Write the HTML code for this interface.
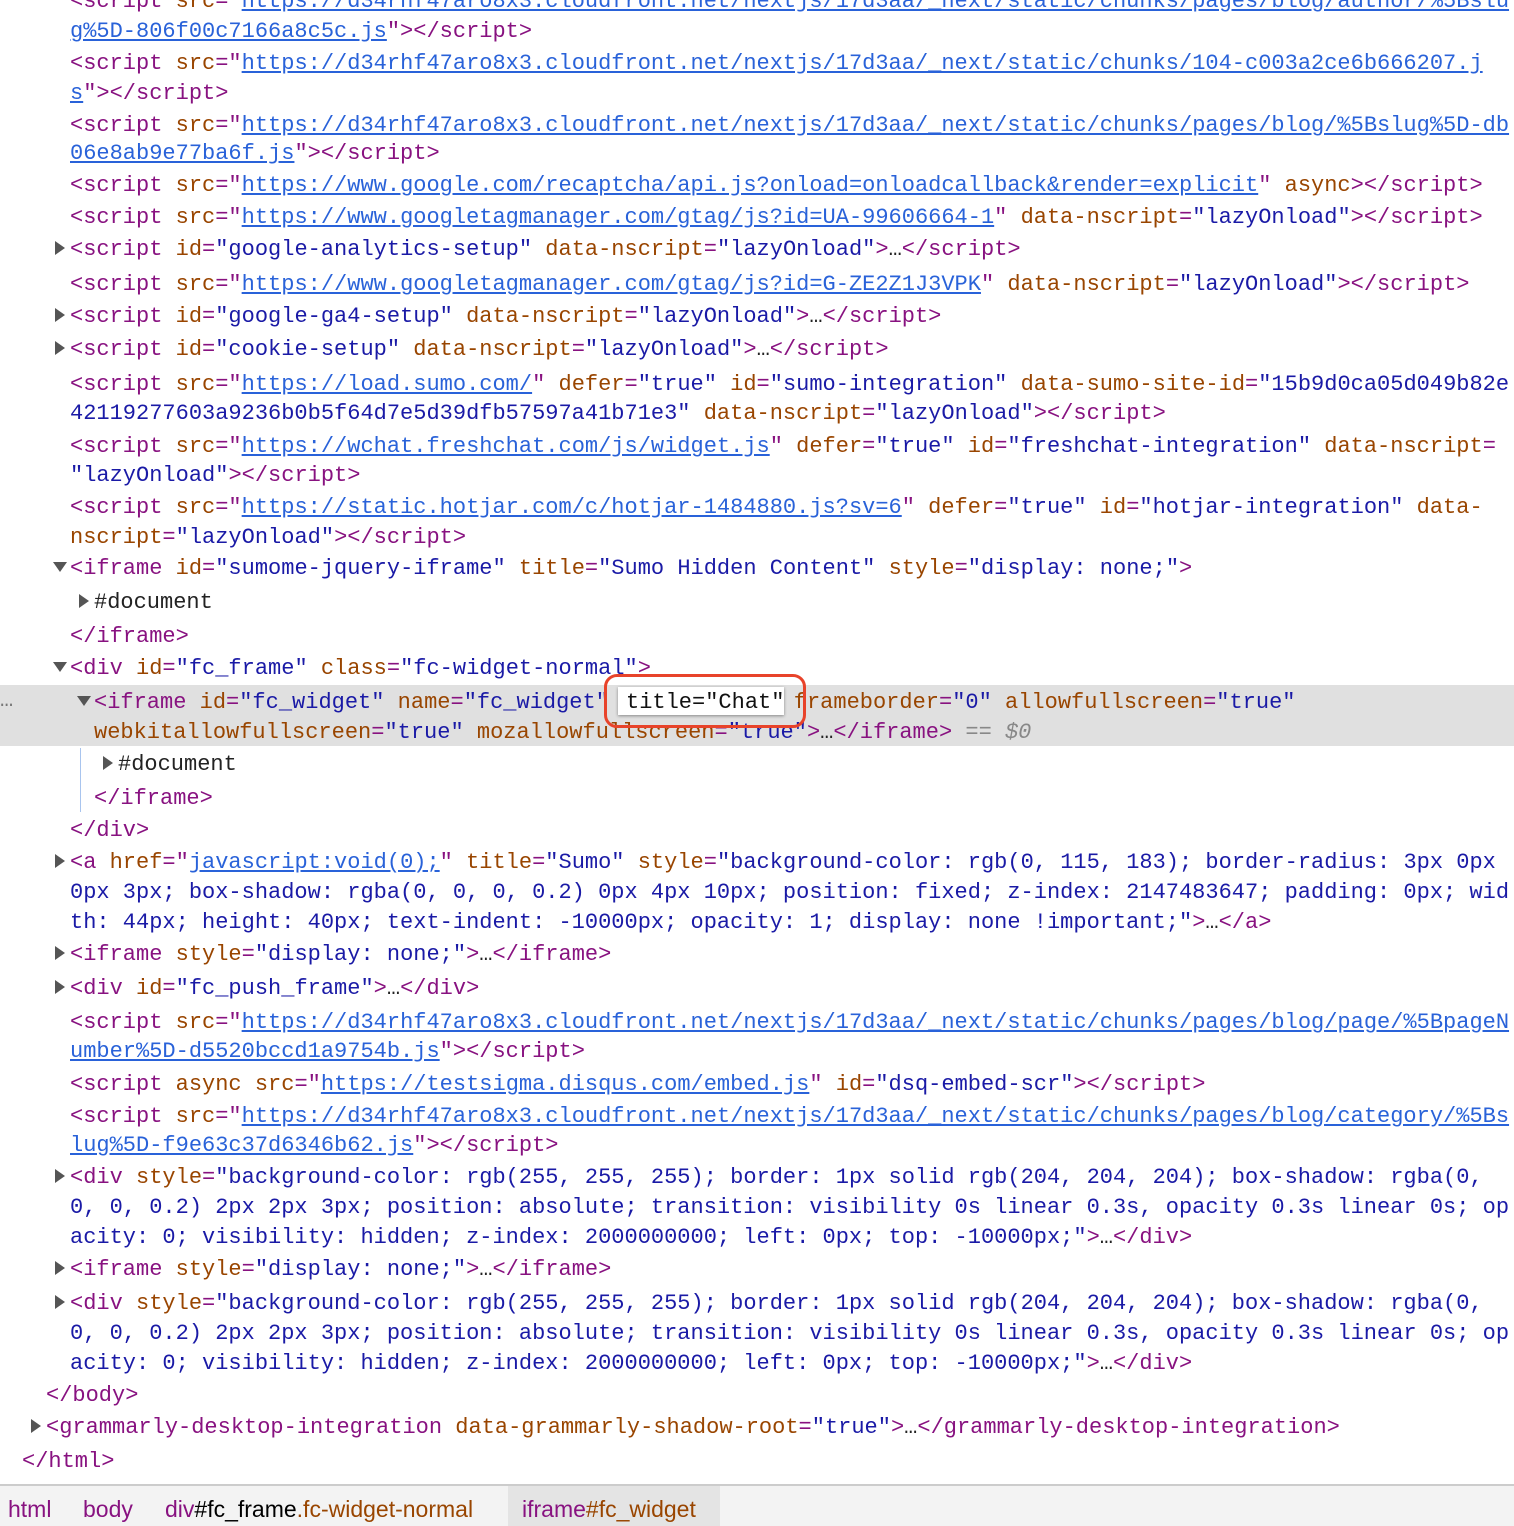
<!DOCTYPE html>
<html><head><meta charset="utf-8"><style>
html,body{margin:0;padding:0;background:#fff;width:1514px;height:1526px;overflow:hidden;position:relative}
.r{position:absolute;white-space:pre;font-family:"Liberation Mono",monospace;font-size:22px;line-height:26px;color:#222;margin-top:2px}
.t{color:#881280}.a{color:#994500}.v{color:#1a1aa6}.l{color:#2962d9;text-decoration:underline}
.tri{position:absolute;width:0;height:0;border-style:solid}
.tr{border-width:7px 0 7px 10px;border-color:transparent transparent transparent #555}
.td{border-width:10px 7px 0 7px;border-color:#555 transparent transparent transparent}
#hl{position:absolute;left:0;top:685px;width:1514px;height:61px;background:#e0e0e0}
#bar{position:absolute;left:0;top:1484px;width:1514px;height:42px;background:#f3f3f3;border-top:2px solid #ccc;font-family:"Liberation Sans",sans-serif;font-size:23px}
#bar > span{position:absolute;top:10px;white-space:nowrap}
</style></head><body>
<div id="hl"></div>
<div style="position:absolute;left:80px;top:748px;width:1px;height:64px;background:#a8c4ee"></div>
<div class="r" style="left:70px;top:-13px"><span class="t">&lt;script </span><span class="a">src</span><span class="t">="</span><span class="l">https://d34rhf47aro8x3.cloudfront.net/nextjs/17d3aa/_next/static/chunks/pages/blog/author/%5Bslu</span></div>
<div class="r" style="left:70px;top:17px"><span class="l">g%5D-806f00c7166a8c5c.js</span><span class="t">"&gt;&lt;/script&gt;</span></div>
<div class="r" style="left:70px;top:49px"><span class="t">&lt;script </span><span class="a">src</span><span class="t">="</span><span class="l">https://d34rhf47aro8x3.cloudfront.net/nextjs/17d3aa/_next/static/chunks/104-c003a2ce6b666207.j</span></div>
<div class="r" style="left:70px;top:79px"><span class="l">s</span><span class="t">"&gt;&lt;/script&gt;</span></div>
<div class="r" style="left:70px;top:111px"><span class="t">&lt;script </span><span class="a">src</span><span class="t">="</span><span class="l">https://d34rhf47aro8x3.cloudfront.net/nextjs/17d3aa/_next/static/chunks/pages/blog/%5Bslug%5D-db</span></div>
<div class="r" style="left:70px;top:139px"><span class="l">06e8ab9e77ba6f.js</span><span class="t">"&gt;&lt;/script&gt;</span></div>
<div class="r" style="left:70px;top:171px"><span class="t">&lt;script </span><span class="a">src</span><span class="t">="</span><span class="l">https://www.google.com/recaptcha/api.js?onload=onloadcallback&amp;render=explicit</span><span class="t">" </span><span class="a">async</span><span class="t">&gt;&lt;/script&gt;</span></div>
<div class="r" style="left:70px;top:203px"><span class="t">&lt;script </span><span class="a">src</span><span class="t">="</span><span class="l">https://www.googletagmanager.com/gtag/js?id=UA-99606664-1</span><span class="t">" </span><span class="a">data-nscript</span><span class="t">=</span><span class="v">"lazyOnload"</span><span class="t">&gt;&lt;/script&gt;</span></div>
<div class="tri tr" style="left:55px;top:241px"></div>
<div class="r" style="left:70px;top:235px"><span class="t">&lt;script </span><span class="a">id</span><span class="t">=</span><span class="v">"google-analytics-setup"</span> <span class="a">data-nscript</span><span class="t">=</span><span class="v">"lazyOnload"</span><span class="t">&gt;</span>…<span class="t">&lt;/script&gt;</span></div>
<div class="r" style="left:70px;top:270px"><span class="t">&lt;script </span><span class="a">src</span><span class="t">="</span><span class="l">https://www.googletagmanager.com/gtag/js?id=G-ZE2Z1J3VPK</span><span class="t">" </span><span class="a">data-nscript</span><span class="t">=</span><span class="v">"lazyOnload"</span><span class="t">&gt;&lt;/script&gt;</span></div>
<div class="tri tr" style="left:55px;top:308px"></div>
<div class="r" style="left:70px;top:302px"><span class="t">&lt;script </span><span class="a">id</span><span class="t">=</span><span class="v">"google-ga4-setup"</span> <span class="a">data-nscript</span><span class="t">=</span><span class="v">"lazyOnload"</span><span class="t">&gt;</span>…<span class="t">&lt;/script&gt;</span></div>
<div class="tri tr" style="left:55px;top:341px"></div>
<div class="r" style="left:70px;top:335px"><span class="t">&lt;script </span><span class="a">id</span><span class="t">=</span><span class="v">"cookie-setup"</span> <span class="a">data-nscript</span><span class="t">=</span><span class="v">"lazyOnload"</span><span class="t">&gt;</span>…<span class="t">&lt;/script&gt;</span></div>
<div class="r" style="left:70px;top:370px"><span class="t">&lt;script </span><span class="a">src</span><span class="t">="</span><span class="l">https://load.sumo.com/</span><span class="t">" </span><span class="a">defer</span><span class="t">=</span><span class="v">"true"</span> <span class="a">id</span><span class="t">=</span><span class="v">"sumo-integration"</span> <span class="a">data-sumo-site-id</span><span class="t">=</span><span class="v">"15b9d0ca05d049b82e</span></div>
<div class="r" style="left:70px;top:399px"><span class="v">42119277603a9236b0b5f64d7e5d39dfb57597a41b71e3"</span> <span class="a">data-nscript</span><span class="t">=</span><span class="v">"lazyOnload"</span><span class="t">&gt;&lt;/script&gt;</span></div>
<div class="r" style="left:70px;top:432px"><span class="t">&lt;script </span><span class="a">src</span><span class="t">="</span><span class="l">https://wchat.freshchat.com/js/widget.js</span><span class="t">" </span><span class="a">defer</span><span class="t">=</span><span class="v">"true"</span> <span class="a">id</span><span class="t">=</span><span class="v">"freshchat-integration"</span> <span class="a">data-nscript</span><span class="t">=</span></div>
<div class="r" style="left:70px;top:461px"><span class="v">"lazyOnload"</span><span class="t">&gt;&lt;/script&gt;</span></div>
<div class="r" style="left:70px;top:493px"><span class="t">&lt;script </span><span class="a">src</span><span class="t">="</span><span class="l">https://static.hotjar.com/c/hotjar-1484880.js?sv=6</span><span class="t">" </span><span class="a">defer</span><span class="t">=</span><span class="v">"true"</span> <span class="a">id</span><span class="t">=</span><span class="v">"hotjar-integration"</span> <span class="a">data-</span></div>
<div class="r" style="left:70px;top:523px"><span class="a">nscript</span><span class="t">=</span><span class="v">"lazyOnload"</span><span class="t">&gt;&lt;/script&gt;</span></div>
<div class="tri td" style="left:53px;top:562px"></div>
<div class="r" style="left:70px;top:554px"><span class="t">&lt;iframe </span><span class="a">id</span><span class="t">=</span><span class="v">"sumome-jquery-iframe"</span> <span class="a">title</span><span class="t">=</span><span class="v">"Sumo Hidden Content"</span> <span class="a">style</span><span class="t">=</span><span class="v">"display: none;"</span><span class="t">&gt;</span></div>
<div class="tri tr" style="left:79px;top:594px"></div>
<div class="r" style="left:94px;top:588px">#document</div>
<div class="r" style="left:70px;top:622px"><span class="t">&lt;/iframe&gt;</span></div>
<div class="tri td" style="left:53px;top:662px"></div>
<div class="r" style="left:70px;top:654px"><span class="t">&lt;div </span><span class="a">id</span><span class="t">=</span><span class="v">"fc_frame"</span> <span class="a">class</span><span class="t">=</span><span class="v">"fc-widget-normal"</span><span class="t">&gt;</span></div>
<div class="r" style="left:0px;top:686px;color:#777">…</div>
<div class="tri td" style="left:77px;top:696px"></div>
<div class="r" style="left:94px;top:688px"><span class="t">&lt;iframe </span><span class="a">id</span><span class="t">=</span><span class="v">"fc_widget"</span> <span class="a">name</span><span class="t">=</span><span class="v">"fc_widget"</span> <span class="a">title</span><span class="t">=</span><span class="v">"Chat"</span> <span class="a">frameborder</span><span class="t">=</span><span class="v">"0"</span> <span class="a">allowfullscreen</span><span class="t">=</span><span class="v">"true"</span></div>
<div class="r" style="left:94px;top:718px"><span class="a">webkitallowfullscreen</span><span class="t">=</span><span class="v">"true"</span> <span class="a">mozallowfullscreen</span><span class="t">=</span><span class="v">"true"</span><span class="t">&gt;</span>…<span class="t">&lt;/iframe&gt;</span><span style="color:#888"> == <i>$0</i></span></div>
<div style="position:absolute;left:618px;top:687px;width:166px;height:28px;background:#fff;box-shadow:0 1px 3px rgba(0,0,0,.4)"></div>
<div class="r" style="left:626px;top:688px;color:#111">title="Chat"</div>
<div style="position:absolute;left:604px;top:674px;width:196px;height:48px;border:3px solid #e8432a;border-radius:13px"></div>
<div class="tri tr" style="left:103px;top:756px"></div>
<div class="r" style="left:118px;top:750px">#document</div>
<div class="r" style="left:94px;top:784px"><span class="t">&lt;/iframe&gt;</span></div>
<div class="r" style="left:70px;top:816px"><span class="t">&lt;/div&gt;</span></div>
<div class="tri tr" style="left:55px;top:854px"></div>
<div class="r" style="left:70px;top:848px"><span class="t">&lt;a </span><span class="a">href</span><span class="t">="</span><span class="l">javascript:void(0);</span><span class="t">" </span><span class="a">title</span><span class="t">=</span><span class="v">"Sumo"</span> <span class="a">style</span><span class="t">=</span><span class="v">"background-color: rgb(0, 115, 183); border-radius: 3px 0px</span></div>
<div class="r" style="left:70px;top:878px"><span class="v">0px 3px; box-shadow: rgba(0, 0, 0, 0.2) 0px 4px 10px; position: fixed; z-index: 2147483647; padding: 0px; wid</span></div>
<div class="r" style="left:70px;top:908px"><span class="v">th: 44px; height: 40px; text-indent: -10000px; opacity: 1; display: none !important;"</span><span class="t">&gt;</span>…<span class="t">&lt;/a&gt;</span></div>
<div class="tri tr" style="left:55px;top:946px"></div>
<div class="r" style="left:70px;top:940px"><span class="t">&lt;iframe </span><span class="a">style</span><span class="t">=</span><span class="v">"display: none;"</span><span class="t">&gt;</span>…<span class="t">&lt;/iframe&gt;</span></div>
<div class="tri tr" style="left:55px;top:980px"></div>
<div class="r" style="left:70px;top:974px"><span class="t">&lt;div </span><span class="a">id</span><span class="t">=</span><span class="v">"fc_push_frame"</span><span class="t">&gt;</span>…<span class="t">&lt;/div&gt;</span></div>
<div class="r" style="left:70px;top:1008px"><span class="t">&lt;script </span><span class="a">src</span><span class="t">="</span><span class="l">https://d34rhf47aro8x3.cloudfront.net/nextjs/17d3aa/_next/static/chunks/pages/blog/page/%5BpageN</span></div>
<div class="r" style="left:70px;top:1037px"><span class="l">umber%5D-d5520bccd1a9754b.js</span><span class="t">"&gt;&lt;/script&gt;</span></div>
<div class="r" style="left:70px;top:1070px"><span class="t">&lt;script </span><span class="a">async src</span><span class="t">="</span><span class="l">https://testsigma.disqus.com/embed.js</span><span class="t">" </span><span class="a">id</span><span class="t">=</span><span class="v">"dsq-embed-scr"</span><span class="t">&gt;&lt;/script&gt;</span></div>
<div class="r" style="left:70px;top:1102px"><span class="t">&lt;script </span><span class="a">src</span><span class="t">="</span><span class="l">https://d34rhf47aro8x3.cloudfront.net/nextjs/17d3aa/_next/static/chunks/pages/blog/category/%5Bs</span></div>
<div class="r" style="left:70px;top:1131px"><span class="l">lug%5D-f9e63c37d6346b62.js</span><span class="t">"&gt;&lt;/script&gt;</span></div>
<div class="tri tr" style="left:55px;top:1169px"></div>
<div class="r" style="left:70px;top:1163px"><span class="t">&lt;div </span><span class="a">style</span><span class="t">=</span><span class="v">"background-color: rgb(255, 255, 255); border: 1px solid rgb(204, 204, 204); box-shadow: rgba(0,</span></div>
<div class="r" style="left:70px;top:1193px"><span class="v">0, 0, 0.2) 2px 2px 3px; position: absolute; transition: visibility 0s linear 0.3s, opacity 0.3s linear 0s; op</span></div>
<div class="r" style="left:70px;top:1223px"><span class="v">acity: 0; visibility: hidden; z-index: 2000000000; left: 0px; top: -10000px;"</span><span class="t">&gt;</span>…<span class="t">&lt;/div&gt;</span></div>
<div class="tri tr" style="left:55px;top:1261px"></div>
<div class="r" style="left:70px;top:1255px"><span class="t">&lt;iframe </span><span class="a">style</span><span class="t">=</span><span class="v">"display: none;"</span><span class="t">&gt;</span>…<span class="t">&lt;/iframe&gt;</span></div>
<div class="tri tr" style="left:55px;top:1295px"></div>
<div class="r" style="left:70px;top:1289px"><span class="t">&lt;div </span><span class="a">style</span><span class="t">=</span><span class="v">"background-color: rgb(255, 255, 255); border: 1px solid rgb(204, 204, 204); box-shadow: rgba(0,</span></div>
<div class="r" style="left:70px;top:1319px"><span class="v">0, 0, 0.2) 2px 2px 3px; position: absolute; transition: visibility 0s linear 0.3s, opacity 0.3s linear 0s; op</span></div>
<div class="r" style="left:70px;top:1349px"><span class="v">acity: 0; visibility: hidden; z-index: 2000000000; left: 0px; top: -10000px;"</span><span class="t">&gt;</span>…<span class="t">&lt;/div&gt;</span></div>
<div class="r" style="left:46px;top:1381px"><span class="t">&lt;/body&gt;</span></div>
<div class="tri tr" style="left:31px;top:1419px"></div>
<div class="r" style="left:46px;top:1413px"><span class="t">&lt;grammarly-desktop-integration </span><span class="a">data-grammarly-shadow-root</span><span class="t">=</span><span class="v">"true"</span><span class="t">&gt;</span>…<span class="t">&lt;/grammarly-desktop-integration&gt;</span></div>
<div class="r" style="left:22px;top:1447px"><span class="t">&lt;/html&gt;</span></div>
<div id="bar">
<div style="position:absolute;left:508px;top:0;width:212px;height:42px;background:#e4e4e4"></div>
<span style="left:8px" class="t">html</span>
<span style="left:83px" class="t">body</span>
<span style="left:165px"><span class="t">div</span>#fc_frame<span class="a">.fc-widget-normal</span></span>
<span style="left:522px"><span class="t">iframe</span><span class="a">#fc_widget</span></span>
</div>
</body></html>
